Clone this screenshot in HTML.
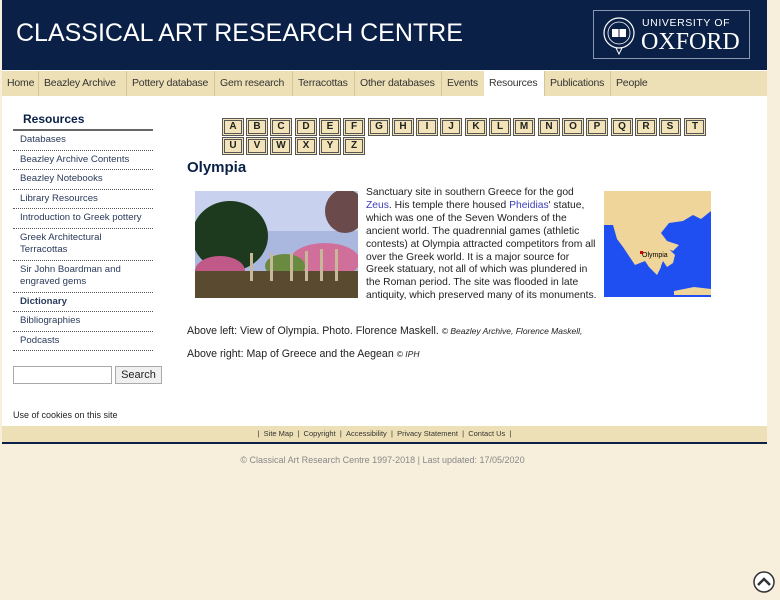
<!DOCTYPE html>
<html><head><meta charset="utf-8"><style>
*{margin:0;padding:0;box-sizing:border-box}
body{width:780px;height:600px;background:#f7efdc;font-family:"Liberation Sans",Arial,sans-serif;position:relative;overflow:hidden;color:#222}
.wrap{position:absolute;left:2px;top:0;width:765px;height:444px;background:#fff}
.hdr{position:absolute;left:0;top:0;width:765px;height:70px;background:#0b2046}
.hdr h1{position:absolute;left:14px;top:19px;font-weight:normal;font-size:25px;color:#fff;white-space:nowrap}
.ox{position:absolute;left:591px;top:10px;width:157px;height:49px;border:1px solid #8a97b0}
.ox .u{position:absolute;left:48px;top:6px;color:#fff;font-size:10.5px;letter-spacing:0.6px}
.ox .o{position:absolute;left:47px;top:18px;color:#fff;font-family:"Liberation Serif",serif;font-size:24px}
.nav{position:absolute;left:0;top:71px;width:765px;height:25px;background:#eee0b6;font-size:10.5px}
.nav span{position:absolute;top:0;height:25px;line-height:25px;border-right:1px solid #d4c69b;padding-left:5px;color:#333;white-space:nowrap;overflow:hidden;letter-spacing:-0.2px}
.side{position:absolute;left:11px;top:112px;width:140px}
.side h3{font-size:12px;color:#0b2046;padding-left:10px;height:19px;border-bottom:2px solid #666}
.side div{font-size:9.6px;color:#2a3a5a;padding:3px 0 3px 7px;border-bottom:1px dotted #555;line-height:12.5px;white-space:nowrap}
.letters{position:absolute;left:220px;top:118px}
.lt{position:absolute;width:22px;height:18px;background:#f2e3b8;border:3px double #555;font-size:10px;font-weight:bold;text-align:center;line-height:12px}
h2{position:absolute;left:185px;top:159px;font-size:15px;color:#0b2046}
.txt{position:absolute;left:364px;top:187px;font-size:10.3px;line-height:12.9px;white-space:nowrap}
a{color:#3d3db8;text-decoration:none}
.cap{position:absolute;left:185px;font-size:10.6px}
.cap i{font-size:8.5px}
</style></head><body>
<div class="wrap">
<div class="hdr"><h1>CLASSICAL ART RESEARCH CENTRE</h1>
<div class="ox">
<svg style="position:absolute;left:8px;top:5px" width="34" height="40" viewBox="0 0 34 40"><circle cx="17" cy="17" r="15" fill="none" stroke="#fff" stroke-width="1.2"/><circle cx="17" cy="17" r="11" fill="none" stroke="#fff" stroke-width="0.8"/><rect x="10" y="13" width="14" height="8" fill="#fff"/><path d="M17 13v8M13 8l2 3 2-3 2 3 2-3" stroke="#0b2046" fill="none"/><path d="M14 32h6l-3 6z" fill="none" stroke="#fff"/></svg>
<span class="u">UNIVERSITY OF</span><span class="o">OXFORD</span></div></div>
<div class="nav">
<span style="left:0;width:37px">Home</span><span style="left:37px;width:88px">Beazley Archive</span><span style="left:125px;width:88px">Pottery database</span><span style="left:213px;width:78px">Gem research</span><span style="left:291px;width:62px">Terracottas</span><span style="left:353px;width:87px">Other databases</span><span style="left:440px;width:44px">Events</span><span style="left:482px;width:61px;background:#fff">Resources</span><span style="left:543px;width:66px">Publications</span><span style="left:609px;width:44px;border:none">People</span>
</div>
<div class="side"><h3>Resources</h3>
<div>Databases</div><div>Beazley Archive Contents</div><div>Beazley Notebooks</div><div>Library Resources</div><div>Introduction to Greek pottery</div><div>Greek Architectural<br>Terracottas</div><div>Sir John Boardman and<br>engraved gems</div><div style="font-weight:bold">Dictionary</div><div>Bibliographies</div><div>Podcasts</div>
</div>
<div style="position:absolute;left:11px;top:366px;width:99px;height:18px;border:1px solid #aaa"></div>
<div style="position:absolute;left:113px;top:366px;width:47px;height:18px;border:1px solid #aaa;background:#f0f0f0;font-size:11px;text-align:center;line-height:16px">Search</div>
<div class="letters">
<div class="lt" style="left:0;top:0">A</div><div class="lt" style="left:24px;top:0">B</div><div class="lt" style="left:48px;top:0">C</div><div class="lt" style="left:73px;top:0">D</div><div class="lt" style="left:97px;top:0">E</div><div class="lt" style="left:121px;top:0">F</div><div class="lt" style="left:146px;top:0">G</div><div class="lt" style="left:170px;top:0">H</div><div class="lt" style="left:194px;top:0">I</div><div class="lt" style="left:218px;top:0">J</div><div class="lt" style="left:243px;top:0">K</div><div class="lt" style="left:267px;top:0">L</div><div class="lt" style="left:291px;top:0">M</div><div class="lt" style="left:316px;top:0">N</div><div class="lt" style="left:340px;top:0">O</div><div class="lt" style="left:364px;top:0">P</div><div class="lt" style="left:389px;top:0">Q</div><div class="lt" style="left:413px;top:0">R</div><div class="lt" style="left:437px;top:0">S</div><div class="lt" style="left:462px;top:0">T</div>
<div class="lt" style="left:0;top:19px">U</div><div class="lt" style="left:24px;top:19px">V</div><div class="lt" style="left:48px;top:19px">W</div><div class="lt" style="left:73px;top:19px">X</div><div class="lt" style="left:97px;top:19px">Y</div><div class="lt" style="left:121px;top:19px">Z</div>
</div>
<h2>Olympia</h2>
<svg style="position:absolute;left:193px;top:191px" width="163" height="107" viewBox="0 0 163 107"><rect width="163" height="107" fill="#aab8e0"/><rect y="0" width="163" height="40" fill="#c8d2ee"/><ellipse cx="35" cy="45" rx="38" ry="35" fill="#1e3a1e"/><ellipse cx="150" cy="20" rx="20" ry="22" fill="#6a4a4a"/><ellipse cx="25" cy="80" rx="25" ry="15" fill="#c05888"/><ellipse cx="130" cy="70" rx="35" ry="18" fill="#d0709a"/><ellipse cx="90" cy="75" rx="20" ry="12" fill="#6a8a40"/><rect y="80" width="163" height="27" fill="#5a4a30"/><g fill="#c8b89a"><rect x="55" y="62" width="3" height="28"/><rect x="75" y="62" width="3" height="28"/><rect x="95" y="62" width="3" height="28"/><rect x="110" y="60" width="3" height="30"/><rect x="125" y="58" width="3" height="32"/><rect x="140" y="58" width="3" height="32"/></g></svg>
<div class="txt">Sanctuary site in southern Greece for the god<br><a>Zeus</a>. His temple there housed <a>Pheidias</a>' statue,<br>which was one of the Seven Wonders of the<br>ancient world. The quadrennial games (athletic<br>contests) at Olympia attracted competitors from all<br>over the Greek world. It is a major source for<br>Greek statuary, not all of which was plundered in<br>the Roman period. The site was flooded in late<br>antiquity, which preserved many of its monuments.</div>
<svg style="position:absolute;left:602px;top:191px" width="107" height="106" viewBox="0 0 107 106"><rect width="107" height="106" fill="#1f4ff0"/><path d="M0 0h107v20l-10 8-8-4-10 6-14 2-8 10 6 8 12 4-6 6-10-4-6 6 4 14-4 8-8-8-4-6-10 4-4-6-8-12-6-8-4-14H0z" fill="#f0d59a"/><path d="M45 58l8-4 10 2 8 8-2 8-6 4-4-6-4 10-4-8-6-6z" fill="#f0d59a"/><path d="M70 100l20-4 17 2v6H70z" fill="#f0d59a"/><rect x="36" y="60" width="3" height="3" fill="#d00"/><text x="38" y="66" font-size="7" font-family="Liberation Sans">Olympia</text></svg>
<div class="cap" style="top:325px">Above left: View of Olympia. Photo. Florence Maskell. <i>© Beazley Archive, Florence Maskell,</i></div>
<div class="cap" style="top:348px">Above right: Map of Greece and the Aegean <i>© IPH</i></div>
<div style="position:absolute;left:11px;top:410px;font-size:9px">Use of cookies on this site</div>
<div style="position:absolute;left:0;top:426px;width:765px;height:16px;background:#eee0b6;font-size:7.5px;text-align:center;line-height:16px;color:#333">| &nbsp;Site Map &nbsp;| &nbsp;Copyright &nbsp;| &nbsp;Accessibility &nbsp;| &nbsp;Privacy Statement &nbsp;| &nbsp;Contact Us &nbsp;|</div>
<div style="position:absolute;left:0;top:442px;width:765px;height:2px;background:#0b2046"></div>
</div>
<div style="position:absolute;left:0;top:455px;width:765px;text-align:center;font-size:9px;color:#888">© Classical Art Research Centre 1997-2018 | Last updated: 17/05/2020</div>
<svg style="position:absolute;left:753px;top:571px" width="22" height="22" viewBox="0 0 22 22"><circle cx="11" cy="11" r="10" fill="#fff" stroke="#333" stroke-width="1.5"/><path d="M5 14l6-6 6 6" stroke="#333" stroke-width="2.5" fill="none"/></svg>
</body></html>
